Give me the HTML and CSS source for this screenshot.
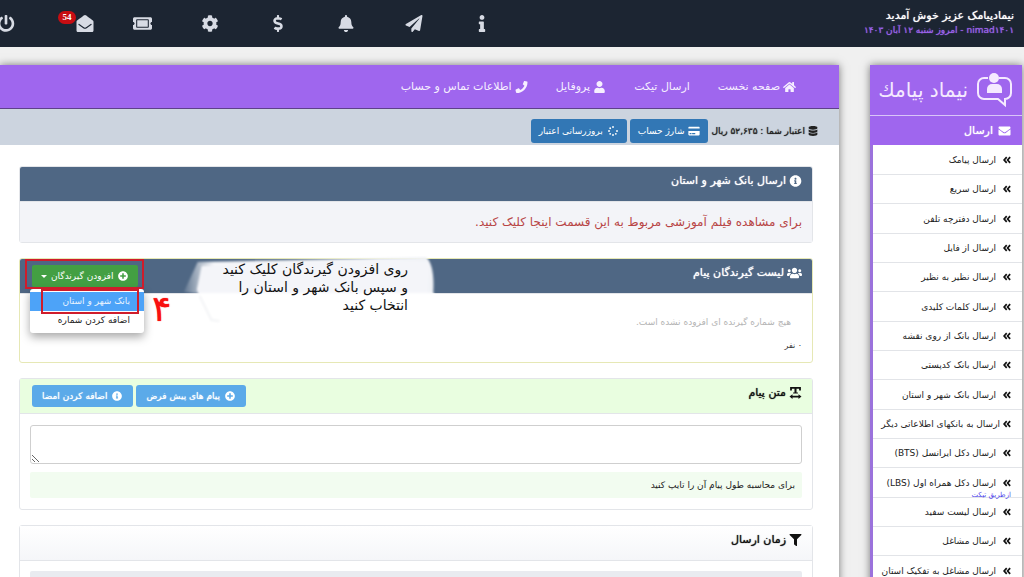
FILE: index.html
```html
<!DOCTYPE html>
<html lang="fa" dir="rtl">
<head>
<meta charset="utf-8">
<meta name="viewport" content="width=device-width, initial-scale=1">
<title>ارسال بانک شهر و استان</title>
<link rel="stylesheet" href="styles.css">
</head>
<body>
<svg class="sprite" aria-hidden="true">
  <symbol id="power" viewBox="0 0 512 512"><path d="M400 54.1c63 45 104 118.6 104 201.9 0 136.8-110.8 247.7-247.5 248C120 504.3 8.2 393 8 256.4 7.9 173.1 48.9 99.3 111.8 54.2c11.7-8.3 28-4.8 35 7.7L162.6 90c5.9 10.5 3.1 23.8-6.6 31-41.5 30.8-68 79.6-68 134.9-.1 92.3 74.5 168.1 168 168.1 91.6 0 168.6-74.2 168-169.1-.3-51.8-24.7-101.8-68.1-134-9.7-7.2-12.4-20.5-6.5-30.9l15.8-28.1c7-12.4 23.2-16.1 34.8-7.8zM296 264V24c0-13.3-10.7-24-24-24h-32c-13.3 0-24 10.7-24 24v240c0 13.3 10.7 24 24 24h32c13.3 0 24-10.7 24-24z"/></symbol>
  <symbol id="mail-open" viewBox="0 0 512 512"><path d="M512 464c0 26.51-21.49 48-48 48H48c-26.51 0-48-21.49-48-48V200.724a48 48 0 0 1 18.387-37.776c24.913-19.529 45.501-35.365 164.2-121.511C199.412 29.17 232.797-.347 256 .003c23.198-.354 56.596 29.172 73.413 41.433 118.687 86.137 139.303 101.995 164.2 121.512A48 48 0 0 1 512 200.724V464zm-65.666-196.605c-2.563-3.728-7.7-4.595-11.339-1.907-22.845 16.873-55.462 40.705-105.582 77.079-16.825 12.266-50.21 41.781-73.413 41.43-23.211.344-56.559-29.143-73.413-41.43-50.114-36.37-82.734-60.204-105.582-77.079-3.639-2.688-8.776-1.821-11.339 1.907l-9.072 13.196a7.998 7.998 0 0 0 1.839 10.967c22.887 16.899 55.454 40.69 105.303 76.868 20.274 14.781 56.524 47.813 92.264 47.573 35.724.242 71.961-32.771 92.263-47.573 49.85-36.179 82.418-59.97 105.303-76.868a7.998 7.998 0 0 0 1.839-10.967l-9.071-13.196z"/></symbol>
  <symbol id="mail" viewBox="0 0 512 512"><path d="M502.3 190.8c3.9-3.1 9.7-.2 9.7 4.7V400c0 26.5-21.5 48-48 48H48c-26.5 0-48-21.5-48-48V195.6c0-5 5.7-7.8 9.7-4.7 22.4 17.4 52.1 39.5 154.1 113.6 21.1 15.4 56.7 47.8 92.2 47.6 35.7.3 72-32.8 92.3-47.6 102-74.1 131.6-96.3 154-113.7zM256 320c23.2.4 56.6-29.2 73.4-41.4 132.7-96.3 142.8-104.7 173.4-128.7 5.8-4.5 9.2-11.5 9.2-18.9v-19c0-26.5-21.5-48-48-48H48c-26.5 0-48 21.5-48 48v19c0 7.4 3.4 14.3 9.2 18.9 30.6 23.9 40.7 32.4 173.4 128.7 16.8 12.2 50.2 41.8 73.4 41.4z"/></symbol>
  <symbol id="ticket" viewBox="0 0 576 512"><path d="M128 160h320v192H128V160zm400 96c0 26.51 21.49 48 48 48v96c0 26.51-21.49 48-48 48H48c-26.51 0-48-21.49-48-48v-96c26.51 0 48-21.49 48-48s-21.49-48-48-48v-96c0-26.51 21.49-48 48-48h480c26.51 0 48 21.49 48 48v96c-26.51 0-48 21.49-48 48zm-48-104c0-13.255-10.745-24-24-24H120c-13.255 0-24 10.745-24 24v208c0 13.255 10.745 24 24 24h336c13.255 0 24-10.745 24-24V152z"/></symbol>
  <symbol id="cog" viewBox="0 0 512 512"><path d="M487.4 315.7l-42.6-24.6c4.3-23.2 4.3-47 0-70.2l42.6-24.6c4.9-2.8 7.1-8.6 5.5-14-11.1-35.6-30-67.8-54.7-94.6-3.8-4.1-10-5.1-14.8-2.3L380.8 110c-17.9-15.4-38.5-27.3-60.8-35.1V25.8c0-5.6-3.9-10.5-9.4-11.7-36.7-8.2-74.3-7.8-109.2 0-5.5 1.2-9.4 6.1-9.4 11.7V75c-22.2 7.9-42.8 19.8-60.8 35.1L88.7 85.5c-4.9-2.8-11-1.9-14.8 2.3-24.7 26.7-43.6 58.9-54.7 94.6-1.7 5.4.6 11.2 5.5 14L67.3 221c-4.3 23.2-4.3 47 0 70.2l-42.6 24.6c-4.9 2.8-7.1 8.6-5.5 14 11.1 35.6 30 67.8 54.7 94.6 3.8 4.1 10 5.1 14.8 2.3l42.6-24.6c17.9 15.4 38.5 27.3 60.8 35.1v49.2c0 5.6 3.9 10.5 9.4 11.7 36.7 8.2 74.3 7.8 109.2 0 5.5-1.2 9.4-6.1 9.4-11.7v-49.2c22.2-7.9 42.8-19.8 60.8-35.1l42.6 24.6c4.9 2.8 11 1.9 14.8-2.3 24.7-26.7 43.6-58.9 54.7-94.6 1.5-5.5-.7-11.3-5.6-14.1zM256 336c-44.1 0-80-35.9-80-80s35.9-80 80-80 80 35.9 80 80-35.9 80-80 80z"/></symbol>
  <symbol id="dollar" viewBox="0 0 288 512"><path d="M209.2 233.4l-108-31.6C88.7 198.2 80 186.5 80 173.5c0-16.3 13.2-29.5 29.5-29.5h66.3c12.2 0 24.2 3.7 34.2 10.5 6.1 4.1 14.3 3.1 19.5-2l34.8-34c7.1-6.9 6.1-18.4-1.8-24.5C238 74.8 207.4 64.1 176 64V16c0-8.8-7.2-16-16-16h-32c-8.8 0-16 7.2-16 16v48h-2.5C45.8 64-5.4 118.7.5 183.6c4.2 46.1 39.4 83.6 83.8 96.6l102.5 30c12.5 3.7 21.2 15.3 21.2 28.3 0 16.3-13.2 29.5-29.5 29.5h-66.3C100 368 88 364.3 78 357.5c-6.1-4.1-14.3-3.1-19.5 2l-34.8 34c-7.1 6.9-6.1 18.4 1.8 24.5 24.5 19.2 55.1 29.9 86.5 30v48c0 8.8 7.2 16 16 16h32c8.8 0 16-7.2 16-16v-48.2c46.6-.9 90.3-28.6 105.7-72.7 21.5-61.6-14.6-124.8-72.5-141.7z"/></symbol>
  <symbol id="bell" viewBox="0 0 448 512"><path d="M224 512c35.32 0 63.97-28.65 63.97-64H160.03c0 35.35 28.65 64 63.97 64zm215.39-149.71c-19.32-20.76-55.47-51.99-55.47-154.29 0-77.7-54.48-139.9-127.94-155.16V32c0-17.67-14.32-32-31.98-32s-31.98 14.33-31.98 32v20.84C118.56 68.1 64.08 130.3 64.08 208c0 102.3-36.15 133.53-55.47 154.29-6 6.45-8.66 14.16-8.61 21.71.11 16.4 12.98 32 32.1 32h383.8c19.12 0 32-15.6 32.1-32 .05-7.55-2.61-15.27-8.61-21.71z"/></symbol>
  <symbol id="plane" viewBox="0 0 512 512"><path d="M476 3.2L12.5 270.6c-18.1 10.4-15.8 35.6 2.2 43.2L121 358.4l287.3-253.2c5.5-4.9 13.3 2.6 8.6 8.3L176 407v80.5c0 23.6 28.5 32.9 42.5 15.8L282 426l124.6 52.2c14.2 6 30.4-2.9 33-18.2l72-432C515 7.8 493.3-6.8 476 3.2z"/></symbol>
  <symbol id="info" viewBox="0 0 192 512"><path d="M20 424.229h20V279.771H20c-11.046 0-20-8.954-20-20V212c0-11.046 8.954-20 20-20h112c11.046 0 20 8.954 20 20v212.229h20c11.046 0 20 8.954 20 20V492c0 11.046-8.954 20-20 20H20c-11.046 0-20-8.954-20-20v-47.771c0-11.046 8.954-20 20-20zM96 0C56.235 0 24 32.235 24 72s32.235 72 72 72 72-32.235 72-72S135.764 0 96 0z"/></symbol>
  <symbol id="home" viewBox="0 0 576 512"><path d="M280.37 148.26L96 300.11V464a16 16 0 0 0 16 16l112.06-.29a16 16 0 0 0 15.92-16V368a16 16 0 0 1 16-16h64a16 16 0 0 1 16 16v95.64a16 16 0 0 0 16 16.05L464 480a16 16 0 0 0 16-16V300L295.67 148.26a12.19 12.19 0 0 0-15.3 0zM571.6 251.47L488 182.56V44.05a12 12 0 0 0-12-12h-56a12 12 0 0 0-12 12v72.61L318.47 43a48 48 0 0 0-61 0L4.34 251.47a12 12 0 0 0-1.6 16.9l25.5 31A12 12 0 0 0 45.15 301l235.22-193.74a12.19 12.19 0 0 1 15.3 0L530.9 301a12 12 0 0 0 16.9-1.6l25.5-31a12 12 0 0 0-1.7-16.93z"/></symbol>
  <symbol id="user" viewBox="0 0 448 512"><path d="M224 256c70.7 0 128-57.3 128-128S294.7 0 224 0 96 57.3 96 128s57.3 128 128 128zm89.6 32h-16.7c-22.2 10.2-46.9 16-72.9 16s-50.6-5.8-72.9-16h-16.7C60.2 288 0 348.2 0 422.4V464c0 26.5 21.5 48 48 48h352c26.5 0 48-21.5 48-48v-41.6c0-74.2-60.2-134.4-134.4-134.4z"/></symbol>
  <symbol id="phone" viewBox="0 0 512 512"><path d="M493.4 24.6l-104-24c-11.3-2.6-22.9 3.3-27.5 13.9l-48 112c-4.2 9.8-1.4 21.3 6.9 28l60.6 49.6c-36 76.7-98.9 140.5-177.2 177.2l-49.6-60.6c-6.8-8.3-18.2-11.1-28-6.9l-112 48C3.9 366.5-2 378.1.6 389.4l24 104C27.1 504.2 36.7 512 48 512c256.1 0 464-207.5 464-464 0-11.2-7.7-20.9-18.6-23.4z"/></symbol>
  <symbol id="coins" viewBox="0 0 448 512"><path d="M448 73.143v45.714C448 159.143 347.667 192 224 192S0 159.143 0 118.857V73.143C0 32.857 100.333 0 224 0s224 32.857 224 73.143zM448 176v102.857C448 319.143 347.667 352 224 352S0 319.143 0 278.857V176c48.125 33.143 136.208 48.572 224 48.572S399.874 209.143 448 176zm0 160v102.857C448 479.143 347.667 512 224 512S0 479.143 0 438.857V336c48.125 33.143 136.208 48.572 224 48.572S399.874 369.143 448 336z"/></symbol>
  <symbol id="card" viewBox="0 0 576 512"><path d="M0 432c0 26.5 21.5 48 48 48h480c26.5 0 48-21.5 48-48V256H0v176zm192-68c0-6.6 5.4-12 12-12h136c6.6 0 12 5.4 12 12v40c0 6.6-5.4 12-12 12H204c-6.6 0-12-5.4-12-12v-40zm-128 0c0-6.6 5.4-12 12-12h72c6.6 0 12 5.4 12 12v40c0 6.6-5.4 12-12 12H76c-6.6 0-12-5.4-12-12v-40zM576 80v48H0V80c0-26.5 21.5-48 48-48h480c26.5 0 48 21.5 48 48z"/></symbol>
  <symbol id="spinner" viewBox="0 0 512 512"><circle cx="256" cy="52" r="48"/><circle cx="256" cy="460" r="48"/><circle cx="52" cy="256" r="48"/><circle cx="460" cy="256" r="48"/><circle cx="112" cy="112" r="48"/><circle cx="112" cy="400" r="48"/><circle cx="400" cy="400" r="48"/></symbol>
  <symbol id="info-circle" viewBox="0 0 512 512"><path d="M256 8C119.043 8 8 119.083 8 256c0 136.997 111.043 248 248 248s248-111.003 248-248C504 119.083 392.957 8 256 8zm0 110c23.196 0 42 18.804 42 42s-18.804 42-42 42-42-18.804-42-42 18.804-42 42-42zm56 254c0 6.627-5.373 12-12 12h-88c-6.627 0-12-5.373-12-12v-24c0-6.627 5.373-12 12-12h12v-64h-12c-6.627 0-12-5.373-12-12v-24c0-6.627 5.373-12 12-12h64c6.627 0 12 5.373 12 12v100h12c6.627 0 12 5.373 12 12v24z"/></symbol>
  <symbol id="plus-circle" viewBox="0 0 512 512"><path d="M256 8C119 8 8 119 8 256s111 248 248 248 248-111 248-248S393 8 256 8zm144 276c0 6.6-5.4 12-12 12h-92v92c0 6.6-5.4 12-12 12h-56c-6.6 0-12-5.4-12-12v-92h-92c-6.6 0-12-5.4-12-12v-56c0-6.6 5.4-12 12-12h92v-92c0-6.6 5.4-12 12-12h56c6.6 0 12 5.4 12 12v92h92c6.6 0 12 5.4 12 12v56z"/></symbol>
  <symbol id="users" viewBox="0 0 640 512"><path d="M96 224c35.3 0 64-28.7 64-64s-28.7-64-64-64-64 28.7-64 64 28.7 64 64 64zm448 0c35.3 0 64-28.7 64-64s-28.7-64-64-64-64 28.7-64 64 28.7 64 64 64zm32 32h-64c-17.6 0-33.5 7.1-45.1 18.6 40.3 22.1 68.9 62 75.1 109.4h66c17.7 0 32-14.3 32-32v-32c0-35.3-28.7-64-64-64zm-256 0c61.9 0 112-50.1 112-112S381.9 32 320 32 208 82.1 208 144s50.1 112 112 112zm76.8 32h-8.3c-20.8 10-43.9 16-68.5 16s-47.6-6-68.5-16h-8.3C179.6 288 128 339.6 128 403.2V432c0 26.5 21.5 48 48 48h288c26.5 0 48-21.5 48-48v-28.8c0-63.6-51.6-115.2-115.2-115.2zm-223.7-13.4C161.5 263.1 145.6 256 128 256H64c-35.3 0-64 28.7-64 64v32c0 17.7 14.3 32 32 32h65.9c6.3-47.4 34.9-87.3 75.2-109.4z"/></symbol>
  <symbol id="filter" viewBox="0 0 512 512"><path d="M487.976 0H24.028C2.71 0-8.047 25.866 7.058 40.971L192 225.941V432c0 7.831 3.821 15.17 10.237 19.662l80 55.98C298.02 518.69 320 507.493 320 487.98V225.941l184.947-184.97C520.021 25.896 509.338 0 487.976 0z"/></symbol>
  <symbol id="text-width" viewBox="0 0 20 20"><path d="M1 0h18v6h-3V3h-4.300v6H14v2H6V9h2.300V3H4v3H1zM5 12v2.500h10V12l5 4-5 4v-2.500H5V20l-5-4z"/></symbol>
  <symbol id="chevrons" viewBox="0 0 14 14"><path d="M6.500 2L2 7l4.500 5M12.500 2L8 7l4.500 5" fill="none" stroke="currentColor" stroke-width="3"/></symbol>
</svg>

<header class="topbar">
  <div class="welcome">
    <span class="heavy">نیمادپیامک عزیز خوش آمدید</span>
    <span class="welcome-date heavy">nimad۱۴۰۱ - امروز شنبه ۱۲ آبان ۱۴۰۳</span>
  </div>
  <nav class="tools" aria-label="ابزارها">
    <a href="#" aria-label="راهنما"><svg class="tool-icon"><use href="#info"/></svg></a>
    <a href="#" aria-label="ارسال"><svg class="tool-icon"><use href="#plane"/></svg></a>
    <a href="#" aria-label="اعلان‌ها"><svg class="tool-icon"><use href="#bell"/></svg></a>
    <a href="#" aria-label="مالی"><svg class="tool-icon"><use href="#dollar"/></svg></a>
    <a href="#" aria-label="تنظیمات"><svg class="tool-icon"><use href="#cog"/></svg></a>
    <a href="#" aria-label="تیکت‌ها"><svg class="tool-icon wide"><use href="#ticket"/></svg></a>
    <a href="#" aria-label="پیام‌ها"><span class="mail"><svg class="tool-icon"><use href="#mail-open"/></svg><span class="badge">54</span></span></a>
    <a href="#" aria-label="خروج"><svg class="tool-icon"><use href="#power"/></svg></a>
  </nav>
</header>

<div class="page">
  <aside class="sidebar">
    <a class="logo" href="#">
      <svg class="logo-mark" viewBox="0 0 36 36" aria-hidden="true">
        <path d="M12 6H8a6 6 0 0 0-6 6v9a6 6 0 0 0 6 6h14l7 6V27a6 6 0 0 0 6-6v-9a6 6 0 0 0-6-6h-6" fill="none" stroke="currentColor" stroke-width="2"/>
        <circle cx="18" cy="6" r="5"/>
        <path d="M11 21v-4a5 5 0 0 1 5-5h5a5 5 0 0 1 5 5v4z"/>
      </svg>
      <span>نیماد پیامك</span>
    </a>
    <h2 class="side-title heavy"><svg class="icon"><use href="#mail"/></svg>ارسال</h2>
    <ul class="side-menu">
      <li><a href="#"><svg class="chev"><use href="#chevrons"/></svg>ارسال پیامک</a></li>
      <li><a href="#"><svg class="chev"><use href="#chevrons"/></svg>ارسال سریع</a></li>
      <li><a href="#"><svg class="chev"><use href="#chevrons"/></svg>ارسال دفترچه تلفن</a></li>
      <li><a href="#"><svg class="chev"><use href="#chevrons"/></svg>ارسال از فایل</a></li>
      <li><a href="#"><svg class="chev"><use href="#chevrons"/></svg>ارسال نظیر به نظیر</a></li>
      <li><a href="#"><svg class="chev"><use href="#chevrons"/></svg>ارسال کلمات کلیدی</a></li>
      <li><a href="#"><svg class="chev"><use href="#chevrons"/></svg>ارسال بانک از روی نقشه</a></li>
      <li><a href="#"><svg class="chev"><use href="#chevrons"/></svg>ارسال بانک کدپستی</a></li>
      <li><a href="#"><svg class="chev"><use href="#chevrons"/></svg>ارسال بانک شهر و استان</a></li>
      <li><a class="tight" href="#"><svg class="chev"><use href="#chevrons"/></svg>ارسال به بانکهای اطلاعاتی دیگر</a></li>
      <li><a href="#"><svg class="chev"><use href="#chevrons"/></svg>ارسال دکل ایرانسل (BTS)</a></li>
      <li><a href="#"><svg class="chev"><use href="#chevrons"/></svg>ارسال دکل همراه اول (LBS)</a><small class="note">ازطریق تیکت</small></li>
      <li><a href="#"><svg class="chev"><use href="#chevrons"/></svg>ارسال لیست سفید</a></li>
      <li><a href="#"><svg class="chev"><use href="#chevrons"/></svg>ارسال مشاغل</a></li>
      <li><a href="#"><svg class="chev"><use href="#chevrons"/></svg>ارسال مشاغل به تفکیک استان</a></li>
    </ul>
  </aside>

  <main class="main">
    <nav class="main-nav" aria-label="منوی اصلی">
      <a href="#"><svg class="icon"><use href="#home"/></svg>صفحه نخست</a>
      <a href="#">ارسال تیکت</a>
      <a href="#"><svg class="icon"><use href="#user"/></svg>پروفایل</a>
      <a href="#"><svg class="icon"><use href="#phone"/></svg>اطلاعات تماس و حساب</a>
    </nav>
    <div class="credit">
      <span class="credit-text heavy"><svg class="icon small"><use href="#coins"/></svg>اعتبار شما : ۵۲,۶۳۵ ریال</span>
      <button class="btn blue" type="button"><svg class="icon small"><use href="#card"/></svg>شارژ حساب</button>
      <button class="btn blue" type="button"><svg class="icon small"><use href="#spinner"/></svg>بروزرسانی اعتبار</button>
    </div>

    <div class="content">
      <section class="card">
        <div class="card-head dark"><h3 class="heavy"><svg class="icon"><use href="#info-circle"/></svg>ارسال بانک شهر و استان</h3></div>
        <div class="help"><a href="#">برای مشاهده فیلم آموزشی مربوط به این قسمت اینجا کلیک کنید.</a></div>
      </section>

      <section class="card recipients">
        <div class="card-head dark">
          <h3 class="heavy"><svg class="icon people"><use href="#users"/></svg>لیست گیرندگان پیام</h3>
          <div class="actions">
            <button class="btn green" type="button"><svg class="icon small"><use href="#plus-circle"/></svg>افزودن گیرندگان<span class="caret"></span></button>
          </div>
        </div>
        <div class="recipients-body">
          <p class="empty">هیچ شماره گیرنده ای افزوده نشده است.</p>
          <p class="count">۰ نفر</p>
        </div>
        <div class="dropdown">
          <a class="active" href="#">بانک شهر و استان</a>
          <a href="#">اضافه کردن شماره</a>
        </div>
        <div class="mark mark-button"></div>
        <div class="mark mark-option"></div>
        <span class="step">۴</span>
        <div class="callout">
          <svg class="brush" viewBox="0 0 270 70" preserveAspectRatio="none" aria-hidden="true">
            <defs>
              <linearGradient id="paint" x1="0" x2="1"><stop offset="0" stop-color="#fff" stop-opacity=".1"/><stop offset=".12" stop-color="#f5f6f9"/><stop offset="1" stop-color="#f1f3f7"/></linearGradient>
              <filter id="soft"><feGaussianBlur stdDeviation="1"/></filter>
            </defs>
            <g filter="url(#soft)">
              <path d="M8 36L22 6Q120 4 205 2L254 1Q263 10 261 38H24z" fill="url(#paint)"/>
              <path d="M26 10L215 4l42 2-2 52-216 5-18-29z" fill="#f4f5f9"/>
              <path d="M22 37h240v27H36z" fill="#fff"/>
              <path d="M24 40l12 24 8 1" fill="none" stroke="#f3f4f6" stroke-width="2"/>
            </g>
          </svg>
          <p>روی افزودن گیرندگان کلیک کنید<br>و سپس بانک شهر و استان را<br>انتخاب کنید</p>
        </div>
      </section>

      <section class="card">
        <div class="card-head lime">
          <h3 class="heavy"><svg class="icon"><use href="#text-width"/></svg><label for="message">متن پیام</label></h3>
          <div class="actions">
            <button class="btn sky heavy" type="button"><svg class="icon small"><use href="#plus-circle"/></svg>پیام های پیش فرض</button>
            <button class="btn sky heavy" type="button"><svg class="icon small"><use href="#info-circle"/></svg>اضافه کردن امضا</button>
          </div>
        </div>
        <div class="message-body">
          <textarea id="message"></textarea>
          <p class="counter">برای محاسبه طول پیام آن را تایپ کنید</p>
        </div>
      </section>

      <section class="card">
        <div class="card-head pale"><h3 class="heavy"><svg class="icon"><use href="#filter"/></svg>زمان ارسال</h3></div>
        <div class="time-body"><div class="time-row"></div></div>
      </section>
    </div>
  </main>
</div>
</body>
</html>
```

FILE: styles.css
```css
* { box-sizing: border-box; }
html { height: 100%; overflow: hidden; }
body {
  height: 100%;
  margin: 0;
  overflow: hidden;
  background: #f0f0f0;
  color: #222;
  font: 9px/16px "DejaVu Sans", sans-serif;
}
h2, h3, p, ul { margin: 0; padding: 0; }
a { color: inherit; text-decoration: none; }
svg { fill: currentColor; flex: none; }
button { font: inherit; cursor: pointer; }
.heavy { font-weight: normal; text-shadow: 0 0 1px currentColor; }
.sprite { position: absolute; width: 0; height: 0; }
.icon { width: 13px; height: 12px; }
.icon.small { width: 12px; height: 10px; }
.icon.people { width: 15px; }

.topbar {
  display: flex;
  justify-content: space-between;
  height: 47px;
  background: #1c2532;
  overflow: hidden;
}
.welcome {
  display: flex;
  flex-direction: column;
  padding: 8px 10px 0;
  color: #fff;
  font-size: 11px;
  line-height: 15px;
}
.welcome-date { color: #9a62ea; font-size: 9px; }
.tools { display: flex; margin-left: -28px; }
.tools a {
  display: flex;
  width: 68px;
  align-items: center;
  justify-content: center;
  color: #d7dbe4;
}
.tool-icon { width: 18px; height: 17px; }
.tool-icon.wide { width: 19px; }
.mail { display: flex; align-items: center; padding-left: 4px; }
.badge {
  align-self: flex-start;
  width: 18px;
  margin-top: -4px;
  border-radius: 7px;
  background: #c70d12;
  color: #fff;
  font: bold 9px/13px "Liberation Serif", serif;
  text-align: center;
}

.page {
  display: flex;
  align-items: flex-start;
  gap: 31px;
  padding: 18px 2px 0 0;
}

.sidebar {
  width: 152px;
  flex: none;
  background: #fff;
  border-left: 3px solid #9b72dc;
  box-shadow: 0 0 8px rgba(0, 0, 0, .5);
}
.logo, .side-title { background: #9f66ee; color: #fff; margin-left: -3px; }
.logo {
  display: flex;
  align-items: center;
  gap: 8px;
  height: 51px;
  padding: 0 10px;
  border-bottom: 1px solid #d9c5f8;
  color: #f5eaff;
  font-size: 20px;
}
.logo span { white-space: nowrap; }
.logo-mark { width: 36px; height: 36px; }
.side-title {
  display: flex;
  align-items: center;
  gap: 5px;
  height: 29px;
  padding: 0 11px;
  font-size: 11px;
}
.side-menu { list-style: none; padding-top: 1px; }
.side-menu li { position: relative; height: 29px; border-bottom: 1px solid #e2e4e8; }
.side-menu li:nth-child(3n) { height: 30px; }
.side-menu a {
  display: flex;
  align-items: center;
  gap: 7px;
  height: 100%;
  padding-right: 11px;
  white-space: nowrap;
}
.side-menu a.tight { gap: 3px; }
.chev { width: 8px; height: 8px; color: #111; }
.note {
  position: absolute;
  top: 20px;
  right: 11px;
  color: #5148ec;
  font-size: 7px;
  line-height: 14px;
}

.main {
  flex: 1;
  min-width: 0;
  background: #fff;
  box-shadow: 0 0 8px rgba(0, 0, 0, .5);
}
.main-nav {
  display: flex;
  gap: 28px;
  height: 44px;
  padding: 0 43px;
  background: #9f66ee;
  border-bottom: 1px solid #5e4189;
  color: #f6efff;
  font-size: 11px;
}
.main-nav a { display: flex; align-items: center; gap: 3px; }
.credit {
  display: flex;
  align-items: center;
  gap: 3px;
  height: 36px;
  padding: 8px 20px 0;
  background: #ccd4df;
}
.credit-text { display: flex; align-items: center; gap: 2px; }
.btn {
  display: flex;
  align-items: center;
  justify-content: center;
  gap: 4px;
  height: 22px;
  padding: 0 9px;
  border: 0;
  border-radius: 3px;
  color: #fff;
  white-space: nowrap;
}
.btn.blue { height: 24px; padding: 0 8px; background: #3277b5; }
.btn.sky { padding: 0 10px; background: #5baae9; }
.btn.green { background: #439f43; border-radius: 2px; }
.caret {
  border: 3px solid transparent;
  border-top-color: currentColor;
  border-bottom: 0;
}

.content {
  display: flex;
  flex-direction: column;
  gap: 15px;
  padding: 21px 26px 0 19px;
}
.card { position: relative; border: 1px solid #e3e5e9; border-radius: 3px; }
.card-head {
  display: flex;
  justify-content: space-between;
  height: 35px;
  padding: 6px 10px 0 12px;
  border-bottom: 1px solid #e3e5e9;
}
.card-head h3 {
  display: flex;
  align-items: center;
  gap: 3px;
  height: 16px;
  font-size: 11px;
}
.card-head.dark { background: #4f6784; color: #fff; border-radius: 2px 2px 0 0; }
.card-head.lime { background: #e9fee0; color: #111; }
.card-head.pale { background: linear-gradient(#fff, #f5f6f9); color: #111; }
.actions { display: flex; gap: 3px; }
.help {
  height: 40px;
  padding: 10px;
  background: #f3f4f8;
  color: #b84545;
  font-size: 12px;
  line-height: 20px;
}
.recipients { border-color: #e6e8b5; }
.recipients-body { height: 68px; padding: 20px 10px 0; }
.empty { padding-right: 11px; color: #b4b4b4; }
.count { margin-top: 8px; font-size: 8px; color: #333; }

.dropdown {
  position: absolute;
  top: 30px;
  left: 10px;
  width: 114px;
  padding: 3px 0;
  border-radius: 3px;
  background: #fff;
  box-shadow: 0 4px 10px rgba(0, 0, 0, .35);
}
.dropdown a { display: block; padding: 0 14px; line-height: 19px; }
.dropdown a.active { background: #4da3f8; color: #eaf4ff; }
.mark { position: absolute; border: 2px solid #cf1c2b; }
.mark-button { top: 0; left: 5px; width: 119px; height: 30px; }
.mark-option { top: 30px; left: 21px; width: 98px; height: 25px; }
.step {
  position: absolute;
  top: 34px;
  left: 132px;
  color: #f90f0f;
  font-size: 36px;
  line-height: 32px;
  text-shadow: 0 0 1px currentColor;
}
.callout {
  position: absolute;
  top: -3px;
  left: 156px;
  width: 266px;
  height: 70px;
  padding: 4px 34px 0 0;
  color: #111;
  font-size: 14px;
  line-height: 18px;
}
.brush { position: absolute; inset: 0; width: 100%; height: 100%; }
.callout p { position: relative; white-space: nowrap; }

.message-body { padding: 11px 10px; }
textarea {
  display: block;
  width: 100%;
  height: 39px;
  padding: 6px;
  border: 1px solid #cfcfcf;
  border-radius: 3px;
  background: #fff;
  font: inherit;
}
.counter {
  margin-top: 8px;
  padding: 5px 7px;
  border-radius: 2px;
  background: #f2fcf0;
  line-height: 16px;
}
.time-body { padding: 10px 10px 20px; }
.time-row { height: 40px; border-radius: 2px; background: #e9ebf0; }
```
